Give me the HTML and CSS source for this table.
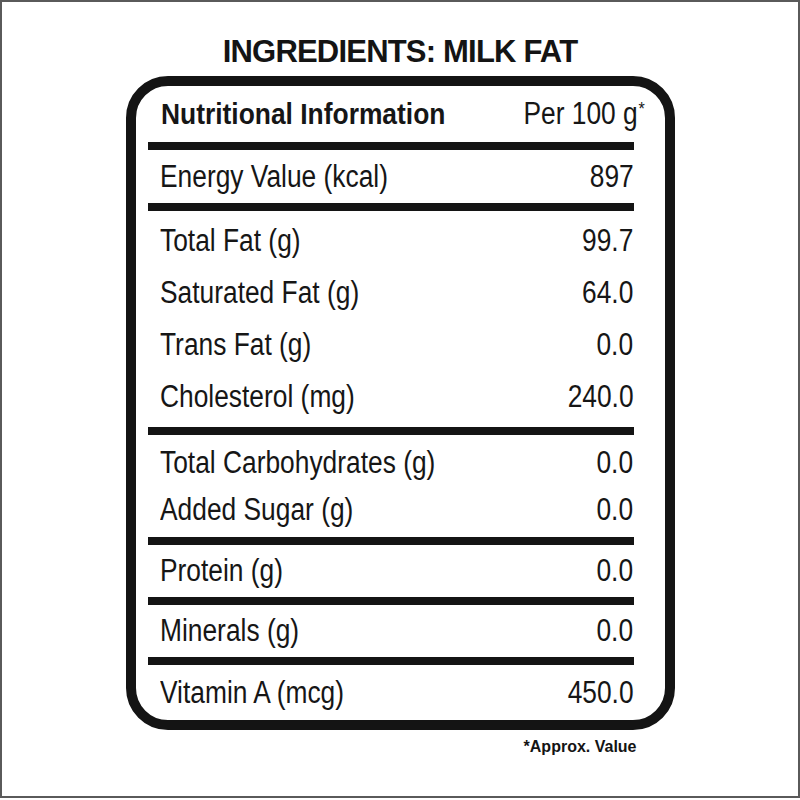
FILE: index.html
```html
<!DOCTYPE html>
<html lang="en">
<head>
<meta charset="utf-8">
<title>Ingredients: Milk Fat</title>
<link rel="stylesheet" href="styles.css">
</head>
<body>
<div class="page">
  <h1 class="title">INGREDIENTS: MILK FAT</h1>
  <div class="panel">
    <div class="row head h-56">
      <span class="name">Nutritional Information</span>
      <span class="val">Per 100 g<span class="star">*</span></span>
    </div>
    <div class="bar"></div>
    <div class="row h-53">
      <span class="name">Energy Value (kcal)</span>
      <span class="val">897</span>
    </div>
    <div class="bar"></div>
    <div class="group fat">
      <div class="row h-52"><span class="name">Total Fat (g)</span><span class="val">99.7</span></div>
      <div class="row h-52"><span class="name">Saturated Fat (g)</span><span class="val">64.0</span></div>
      <div class="row h-52"><span class="name">Trans Fat (g)</span><span class="val">0.0</span></div>
      <div class="row h-52"><span class="name">Cholesterol (mg)</span><span class="val">240.0</span></div>
    </div>
    <div class="bar"></div>
    <div class="group carbs">
      <div class="row h-47"><span class="name">Total Carbohydrates (g)</span><span class="val">0.0</span></div>
      <div class="row h-47"><span class="name">Added Sugar (g)</span><span class="val">0.0</span></div>
    </div>
    <div class="bar"></div>
    <div class="row h-52"><span class="name">Protein (g)</span><span class="val">0.0</span></div>
    <div class="bar"></div>
    <div class="row h-52"><span class="name">Minerals (g)</span><span class="val">0.0</span></div>
    <div class="bar"></div>
    <div class="row h-55"><span class="name">Vitamin A (mcg)</span><span class="val">450.0</span></div>
  </div>
  <p class="note">*Approx. Value</p>
</div>
</body>
</html>
```

FILE: styles.css
```css
* {
  box-sizing: border-box;
}

html, body {
  margin: 0;
  padding: 0;
  background: #ffffff;
}

body {
  font-family: "Liberation Sans", Arial, Helvetica, sans-serif;
  color: #161616;
}

.page {
  width: 800px;
  height: 798px;
  border: 2px solid #5a5a5a;
  display: flex;
  flex-direction: column;
  align-items: center;
  padding-top: 30px;
}

.title {
  margin: 0;
  font-size: 31px;
  line-height: 40px;
  font-weight: 700;
  letter-spacing: -0.8px;
  color: #141414;
}

.panel {
  margin-top: 4px;
  width: 549px;
  border: 10px solid #141414;
  border-radius: 42px;
  padding: 0 31px 0 12px;
  display: flex;
  flex-direction: column;
}

.bar {
  height: 8px;
  background: #141414;
}

.group.fat {
  padding: 4px 0;
}

.group.carbs {
  padding: 4px 0;
}

.row {
  display: flex;
  justify-content: space-between;
  align-items: center;
  padding-left: 12px;
  font-size: 31px;
  white-space: nowrap;
}

.row .name {
  display: inline-block;
  transform: scaleX(0.85);
  transform-origin: left center;
}

.row .val {
  display: inline-block;
  transform: scaleX(0.85);
  transform-origin: right center;
}

.h-56 { height: 56px; }
.h-55 { height: 55px; }
.h-53 { height: 53px; }
.h-52 { height: 52px; }
.h-47 { height: 47px; }

.row.head {
  padding-left: 13px;
}

.row.head .name {
  font-weight: 700;
  font-size: 29px;
  transform: scaleX(0.91);
}

.star {
  font-size: 19px;
  vertical-align: 9px;
  margin-right: -13px;
  margin-left: 1px;
}

.note {
  margin: 7px 0 0 0;
  width: 549px;
  padding-right: 38px;
  text-align: right;
  font-size: 16px;
  line-height: 20px;
  font-weight: 700;
  color: #141414;
}
```
